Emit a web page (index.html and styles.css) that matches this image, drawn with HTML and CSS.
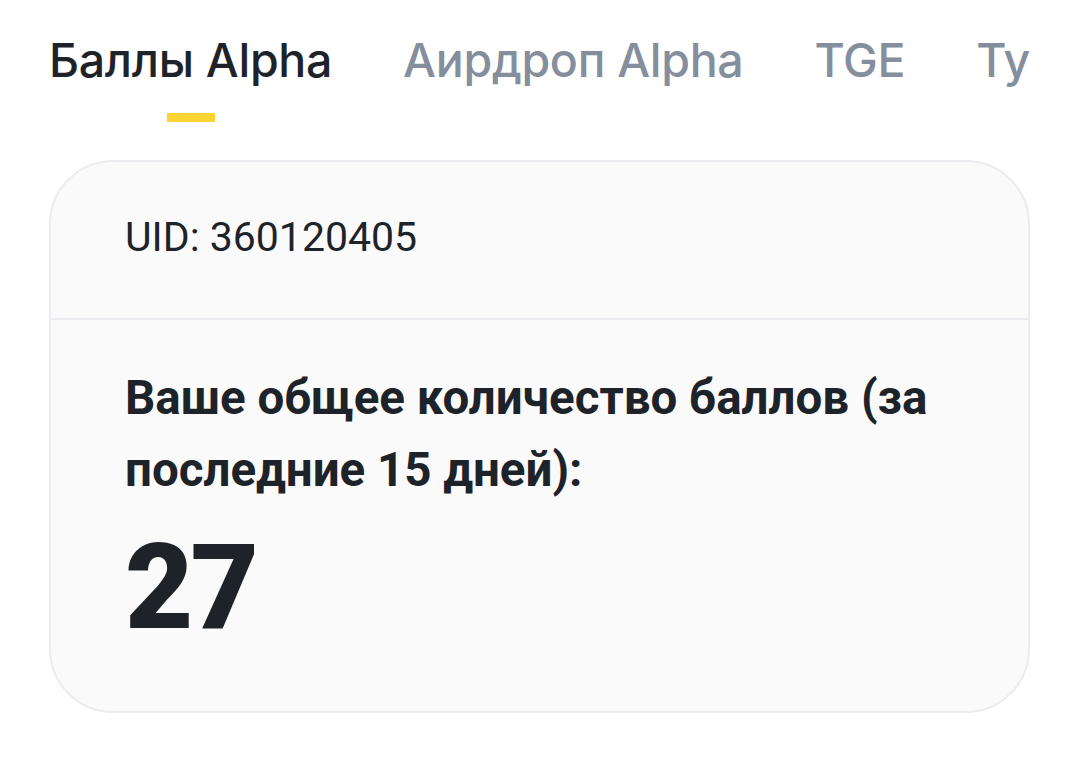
FILE: index.html
```html
<!DOCTYPE html>
<html lang="ru">
<head>
<meta charset="utf-8">
<link rel="stylesheet" href="styles.css">
</head>
<body>
<div class="page">
  <nav class="tabs">
    <div class="tab active">Баллы Alpha<span class="bar"></span></div>
    <div class="tab">Аирдроп Alpha</div>
    <div class="tab">TGE</div>
    <div class="tab">Турниры</div>
  </nav>
  <section class="card">
    <div class="card-head">UID: 360120405</div>
    <div class="card-body">
      <h2 class="title">Ваше общее количество баллов (за последние 15 дней):</h2>
      <div class="score">27</div>
    </div>
  </section>
</div>
</body>
</html>
```
FILE: styles.css
```css
html, body {
  margin: 0;
  padding: 0;
  background: #ffffff;
}
.page {
  width: 981px;
  margin-left: 49px;
}
.tabs {
  display: flex;
  gap: 71px;
  overflow: hidden;
  height: 160px;
  white-space: nowrap;
  font-family: Inter, "Noto Sans", sans-serif;
  font-weight: 500;
  font-size: 46.5px;
  letter-spacing: -0.3px;
}
.tab {
  position: relative;
  color: #848e9c;
  padding-top: 32px;
  line-height: 56px;
  flex: none;
}
.tab.active {
  color: #1e2329;
}
.bar {
  position: absolute;
  left: 50%;
  margin-left: -24px;
  top: 113px;
  width: 48px;
  height: 9px;
  background: #fcd535;
}
.card {
  box-sizing: border-box;
  width: 981px;
  border: 2px solid #eaecef;
  border-radius: 64px;
  background: #fafafa;
  overflow: hidden;
}
.card-head {
  box-sizing: border-box;
  height: 158px;
  display: flex;
  align-items: center;
  padding-left: 74px;
  padding-bottom: 6px;
  font-family: Roboto, "Liberation Sans", sans-serif;
  font-size: 41px;
  color: #1e2329;
  border-bottom: 2px solid #eaecef;
}
.card-body {
  padding: 42px 40px 64px 74px;
}
.title {
  margin: 0;
  font-family: Roboto, "Liberation Sans", sans-serif;
  font-weight: 700;
  font-size: 47.5px;
  line-height: 72px;
  color: #1e2329;
}
.score {
  margin-top: 23px;
  font-family: Roboto, Inter, sans-serif;
  font-weight: 900;
  font-size: 118px;
  line-height: 118px;
  color: #1e2329;
  letter-spacing: -3px;
}
```
